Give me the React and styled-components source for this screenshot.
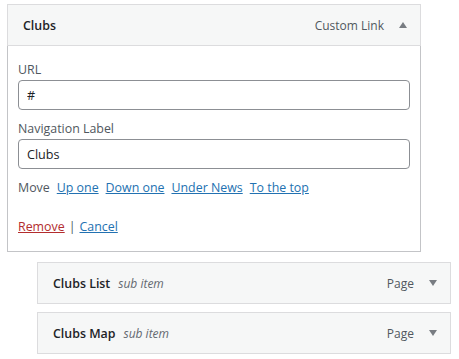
import React from "react";
import styled, { createGlobalStyle } from "styled-components";

const Global = createGlobalStyle`
  html, body { margin: 0; padding: 0; background: #fff; }
  body { font-family: "Open Sans", "Noto Sans", sans-serif; font-size: 12.4px; color: #1d2327; }
  * { box-sizing: border-box; }
`;

const Page = styled.div`
  padding: 4px 0 0 7px;
  display: flex;
  flex-direction: column;
`;

const Item = styled.div`
  width: 414px;
  margin-left: ${(p) => (p.$depth ? 30 * p.$depth : 0)}px;
  margin-top: ${(p) => p.$gap || 0}px;
`;

const Handle = styled.div`
  height: 42px;
  display: flex;
  align-items: center;
  background: #f6f7f7;
  border: 1px solid #dcdcde;
  padding: 0 12px 0 15px;
`;

const Title = styled.span`
  font-weight: 600;
  color: #1d2327;
  flex: 1;
  display: flex;
  align-items: baseline;
  gap: 8px;
`;

const SubLabel = styled.span`
  font-weight: 400;
  font-style: italic;
  color: #646970;
  font-size: 12px;
`;

const Type = styled.span`
  color: #50575e;
  font-size: 12px;
  margin-right: 15px;
`;

const Arrow = styled.span`
  width: 0;
  height: 0;
  border-left: 4px solid transparent;
  border-right: 4px solid transparent;
  ${(p) =>
    p.$up
      ? "border-bottom: 6px solid #787c82;"
      : "border-top: 6px solid #787c82;"}
  margin-right: 1px;
`;

const Settings = styled.div`
  border: 1px solid #c3c4c7;
  border-top: none;
  padding: 14px 10px 15px 10px;
`;

const Field = styled.div`
  margin-bottom: 9px;
`;

const Label = styled.label`
  display: block;
  line-height: 20px;
  color: #50575e;
`;

const Input = styled.input`
  display: block;
  width: 100%;
  height: 30px;
  border: 1px solid #8c8f94;
  border-radius: 4px;
  padding: 0 8px;
  font: inherit;
  font-size: 12.6px;
  color: #1d2327;
  background: #fff;
  outline: none;
`;

const MoveRow = styled.div`
  display: flex;
  gap: 7px;
  line-height: 18px;
  color: #50575e;
  margin-top: 10px;
`;

const Link = styled.a`
  color: ${(p) => (p.$danger ? "#b32d2e" : "#2271b1")};
  text-decoration: underline;
  cursor: pointer;
`;

const Actions = styled.div`
  margin-top: 21px;
  line-height: 18px;
  color: #50575e;
`;

const Sep = styled.span`
  margin: 0 4px;
`;

export default function App() {
  return (
    <>
      <Global />
      <Page>
        <Item>
          <Handle>
            <Title>Clubs</Title>
            <Type>Custom Link</Type>
            <Arrow $up />
          </Handle>
          <Settings>
            <Field>
              <Label>URL</Label>
              <Input defaultValue="#" />
            </Field>
            <Field>
              <Label>Navigation Label</Label>
              <Input defaultValue="Clubs" />
            </Field>
            <MoveRow>
              <span>Move</span>
              <Link>Up one</Link>
              <Link>Down one</Link>
              <Link>Under News</Link>
              <Link>To the top</Link>
            </MoveRow>
            <Actions>
              <Link $danger>Remove</Link>
              <Sep>|</Sep>
              <Link>Cancel</Link>
            </Actions>
          </Settings>
        </Item>
        <Item $depth={1} $gap={10}>
          <Handle>
            <Title>
              Clubs List <SubLabel>sub item</SubLabel>
            </Title>
            <Type>Page</Type>
            <Arrow />
          </Handle>
        </Item>
        <Item $depth={1} $gap={8}>
          <Handle>
            <Title>
              Clubs Map <SubLabel>sub item</SubLabel>
            </Title>
            <Type>Page</Type>
            <Arrow />
          </Handle>
        </Item>
      </Page>
    </>
  );
}
